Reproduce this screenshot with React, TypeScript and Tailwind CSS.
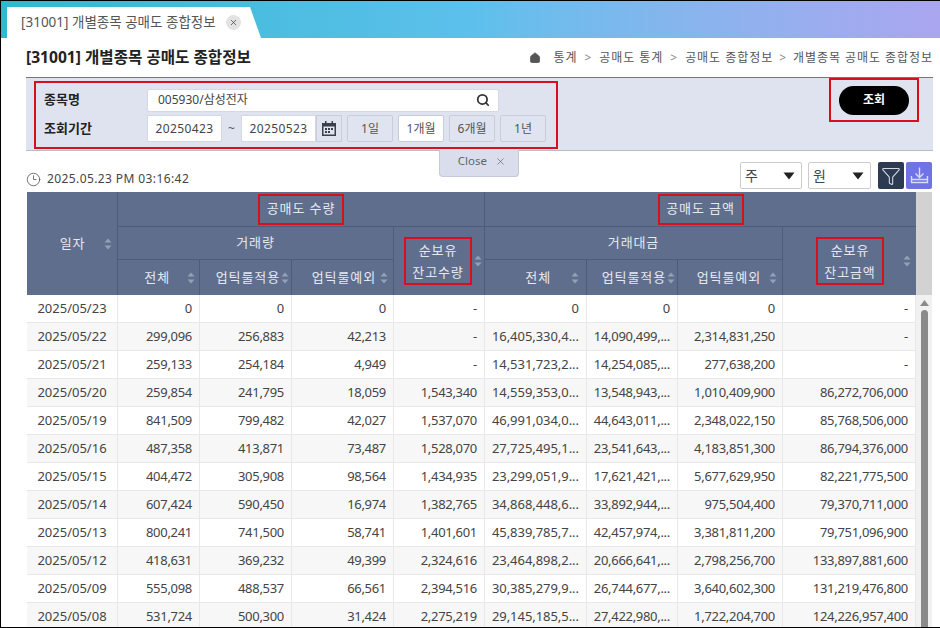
import { Clock3, Filter, Home, Search, X } from "lucide-react";

const rows = [
    ["2025/05/23", "0", "0", "0", "-", "0", "0", "0", "-"],
    ["2025/05/22", "299,096", "256,883", "42,213", "-", "16,405,330,4...", "14,090,499,...", "2,314,831,250", "-"],
    ["2025/05/21", "259,133", "254,184", "4,949", "-", "14,531,723,2...", "14,254,085,...", "277,638,200", "-"],
    ["2025/05/20", "259,854", "241,795", "18,059", "1,543,340", "14,559,353,0...", "13,548,943,...", "1,010,409,900", "86,272,706,000"],
    ["2025/05/19", "841,509", "799,482", "42,027", "1,537,070", "46,991,034,0...", "44,643,011,...", "2,348,022,150", "85,768,506,000"],
    ["2025/05/16", "487,358", "413,871", "73,487", "1,528,070", "27,725,495,1...", "23,541,643,...", "4,183,851,300", "86,794,376,000"],
    ["2025/05/15", "404,472", "305,908", "98,564", "1,434,935", "23,299,051,9...", "17,621,421,...", "5,677,629,950", "82,221,775,500"],
    ["2025/05/14", "607,424", "590,450", "16,974", "1,382,765", "34,868,448,6...", "33,892,944,...", "975,504,400", "79,370,711,000"],
    ["2025/05/13", "800,241", "741,500", "58,741", "1,401,601", "45,839,785,7...", "42,457,974,...", "3,381,811,200", "79,751,096,900"],
    ["2025/05/12", "418,631", "369,232", "49,399", "2,324,616", "23,464,898,2...", "20,666,641,...", "2,798,256,700", "133,897,881,600"],
    ["2025/05/09", "555,098", "488,537", "66,561", "2,394,516", "30,385,279,9...", "26,744,677,...", "3,640,602,300", "131,219,476,800"],
    ["2025/05/08", "531,724", "500,300", "31,424", "2,275,219", "29,145,185,5...", "27,422,980,...", "1,722,204,700", "124,226,957,400"],
];

const cols = "grid-cols-[91px_82px_92px_102px_91px_102px_91px_105px_133px]";

function SortIcon() {
    return (
        <svg width="8" height="12" viewBox="0 0 8 12" className="shrink-0">
            <path d="M4 0.5 L7.5 4.5 H0.5 Z M4 11.5 L0.5 7.5 H7.5 Z" fill="#93a0b8" />
        </svg>
    );
}

function RangeBtn({ label, white }: { label: string; white?: boolean }) {
    return (
        <button
            className={
                white
                    ? "w-[46px] h-[27px] border border-[#c9cdda] rounded-[2px] bg-white text-[12px] text-[#555]"
                    : "w-[46px] h-[27px] border border-[#c9cdda] rounded-[2px] bg-[#e0e4f0] text-[12px] text-[#555]"
            }
        >
            {label}
        </button>
    );
}

function Caret() {
    return (
        <svg width="12" height="8" viewBox="0 0 12 8">
            <path d="M0.5 0.5 H11.5 L6 7.5 Z" fill="#222" />
        </svg>
    );
}

function CalendarIcon() {
    return (
        <svg width="16" height="17" viewBox="0 0 16 17">
            <path d="M1 3 H4 V1 H5.5 V3 H10.5 V1 H12 V3 H15 V16 H1 Z" fill="#3a3f4c" />
            <rect x="2.5" y="6.5" width="11" height="8" fill="#e0e4f0" />
            <path d="M4 8 H6 V10 H4 Z M7 8 H9 V10 H7 Z M10 8 H12 V10 H10 Z M4 11 H6 V13 H4 Z M7 11 H9 V13 H7 Z" fill="#3a3f4c" />
        </svg>
    );
}

function App() {
    return (
        <div className="relative w-[940px] h-[628px] overflow-hidden bg-white border-y border-l border-black font-['Noto_Sans','Noto_Sans_CJK_KR',sans-serif] text-[#333]">
            {/* top tab bar */}
            <div className="h-[37px] pl-[6px] pt-[6px] bg-gradient-to-r from-[#2fb9cf] via-[#5cc0ec] to-[#aaa6ef]">
                <div className="w-[254px] h-[31px] pl-[14px] flex items-center bg-white [clip-path:polygon(0_0,243px_0,254px_100%,0_100%)]">
                    <span className="text-[13.5px] text-[#555] whitespace-nowrap">[31001] 개별종목 공매도 종합정보</span>
                    <span className="ml-[10px] w-[15px] h-[15px] rounded-full bg-[#e3e3e3] flex items-center justify-center">
                        <X size={9} strokeWidth={2} className="text-[#444]" />
                    </span>
                </div>
            </div>

            <div className="pl-[25px] pr-[7px]">
                {/* title + breadcrumb */}
                <div className="h-[39px] flex items-center justify-between">
                    <h1 className="text-[15.6px] font-bold text-[#222] whitespace-nowrap">[31001] 개별종목 공매도 종합정보</h1>
                    <div className="flex items-center text-[12px] text-[#555] whitespace-nowrap tracking-[0.95px]">
                        <Home size={12} fill="#555" strokeWidth={1.5} className="mr-[12px]" />
                        <span>통계</span>
                        <span className="mx-[7px] text-[#888]">&gt;</span>
                        <span>공매도 통계</span>
                        <span className="mx-[7px] text-[#888]">&gt;</span>
                        <span>공매도 종합정보</span>
                        <span className="mx-[6px] text-[#888]">&gt;</span>
                        <span>개별종목 공매도 종합정보</span>
                    </div>
                </div>

                {/* search panel */}
                <div className="relative h-[74px] bg-[#dfe3f0] border-t border-[#777] border-b-[1px] border-b-[#b9bdca] flex justify-between">
                    <div className="ml-[8px] mt-[3px] w-[524px] h-[68px] border-2 border-[#d8101c] pl-[8px] pt-[5px]">
                        <div className="flex items-center h-[24px]">
                            <span className="w-[103px] text-[13px] font-bold text-[#222]">종목명</span>
                            <div className="w-[352px] h-[23px] bg-white border border-[#d5d8e3] rounded-[2px] flex items-center justify-between pl-[10px] pr-[8px]">
                                <span className="text-[12px] text-[#444]">005930/삼성전자</span>
                                <Search size={14} strokeWidth={3} className="text-[#333]" />
                            </div>
                        </div>
                        <div className="flex items-center h-[27px] mt-[3px]">
                            <span className="w-[103px] text-[13px] font-bold text-[#222]">조회기간</span>
                            <div className="w-[75px] h-[27px] bg-white border border-[#d5d8e3] rounded-[2px] flex items-center justify-center text-[12px] text-[#444] tracking-[0.4px]">20250423</div>
                            <span className="w-[19px] text-center text-[12px] text-[#555]">~</span>
                            <div className="w-[75px] h-[27px] bg-white border border-[#d5d8e3] flex items-center justify-center text-[12px] text-[#444] tracking-[0.4px]">20250523</div>
                            <div className="w-[26px] h-[27px] border border-[#c9cdda] flex items-center justify-center">
                                <CalendarIcon />
                            </div>
                            <div className="flex gap-[5px] ml-[5px]">
                                <RangeBtn label="1일" />
                                <RangeBtn label="1개월" white />
                                <RangeBtn label="6개월" />
                                <RangeBtn label="1년" />
                            </div>
                        </div>
                    </div>
                    <div className="mr-[14px] w-[90px] h-[44px] border-2 border-[#d8101c] flex items-center justify-center">
                        <button className="w-[70px] h-[29px] rounded-full bg-black text-white text-[12px] font-bold">조회</button>
                    </div>

                    {/* close tab under the panel */}
                    <div className="absolute left-[413px] top-[72px] w-[80px] h-[27px] z-10 bg-[#d9ddec] border border-t-0 border-[#c5c9d8] rounded-b-[4px] flex items-center justify-end gap-[8px] pr-[12px] pb-[4px] text-[11.5px] text-[#666]">
                        Close
                        <X size={11} strokeWidth={1.5} />
                    </div>
                </div>

                {/* time + options */}
                <div className="h-[41px] flex items-center justify-between">
                    <div className="flex items-center pt-[15px] text-[12px] text-[#444] tracking-[0.4px]">
                        <Clock3 size={15} strokeWidth={1.3} className="mr-[6px] text-[#555]" />
                        2025.05.23 PM 03:16:42
                    </div>
                    <div className="flex items-center pt-[8px] mr-[1px]">
                        <div className="w-[62px] h-[27px] bg-white border border-[#ccc] rounded-[2px] flex items-center justify-between pl-[4px] pr-[6px] text-[14px] text-[#444]">
                            주
                            <Caret />
                        </div>
                        <div className="ml-[6px] w-[63px] h-[27px] bg-white border border-[#ccc] rounded-[2px] flex items-center justify-between pl-[4px] pr-[6px] text-[14px] text-[#444]">
                            원
                            <Caret />
                        </div>
                        <div className="ml-[7px] w-[26px] h-[27px] rounded-[2px] bg-[#2c3a52] flex items-center justify-center">
                            <Filter size={20} strokeWidth={1.3} className="text-[#d5dae5]" />
                        </div>
                        <div className="ml-[2px] w-[26px] h-[27px] rounded-[2px] bg-[#6f73e6] flex items-center justify-center">
                            <svg width="19" height="19" viewBox="0 0 19 19" fill="none" stroke="#d8dbf8" strokeWidth="1.4">
                                <path d="M9.5 1.5 V11 M5.5 7.5 L9.5 11.5 L13.5 7.5 M1.5 10 V16.5 H17.5 V10 M1.5 13.5 H17.5" />
                            </svg>
                        </div>
                    </div>
                </div>

                {/* grid */}
                <div className="flex">
                    <div className="w-[889px] ml-[1px]">
                        <div className={`grid ${cols} grid-rows-[35px_33px_35px] bg-[#5f6e8d] text-[13px] text-[#e6e9f0] tracking-[0.9px]`}>
                            <div className="row-span-3 border-r border-[#4e5c7a] flex items-center justify-center gap-[19px]">
                                <span className="ml-[28px]">일자</span>
                                <SortIcon />
                            </div>
                            <div className="col-span-4 border-r border-b border-[#4e5c7a] flex items-center justify-center">
                                <span className="w-[86px] h-[31px] border-2 border-[#d8101c] flex items-center justify-center">공매도 수량</span>
                            </div>
                            <div className="col-span-4 border-b border-[#4e5c7a] flex items-center justify-center">
                                <span className="w-[86px] h-[31px] border-2 border-[#d8101c] flex items-center justify-center">공매도 금액</span>
                            </div>

                            <div className="col-span-3 border-r border-b border-[#4e5c7a] flex items-center justify-center">거래량</div>
                            <div className="row-span-2 border-r border-[#4e5c7a] flex items-center">
                                <span className="ml-[10px] w-[68px] h-[48px] border-2 border-[#d8101c] flex flex-col items-center justify-center leading-[22px] whitespace-nowrap">
                                    <span>순보유</span>
                                    <span>잔고수량</span>
                                </span>
                                <span className="ml-[2px]">
                                    <SortIcon />
                                </span>
                            </div>
                            <div className="col-span-3 border-r border-b border-[#4e5c7a] flex items-center justify-center">거래대금</div>
                            <div className="row-span-2 flex items-center">
                                <span className="ml-[33px] w-[68px] h-[48px] border-2 border-[#d8101c] flex flex-col items-center justify-center leading-[22px] whitespace-nowrap">
                                    <span>순보유</span>
                                    <span>잔고금액</span>
                                </span>
                                <span className="ml-[19px]">
                                    <SortIcon />
                                </span>
                            </div>

                            <div className="border-r border-[#4e5c7a] flex items-center justify-end pr-[4px] gap-[17px]">
                                전체
                                <SortIcon />
                            </div>
                            <div className="border-r border-[#4e5c7a] flex items-center justify-end pr-[2px] gap-[1px] whitespace-nowrap">
                                업틱룰적용
                                <SortIcon />
                            </div>
                            <div className="border-r border-[#4e5c7a] flex items-center justify-end pr-[5px] gap-[4px] whitespace-nowrap">
                                업틱룰예외
                                <SortIcon />
                            </div>
                            <div className="border-r border-[#4e5c7a] flex items-center justify-end pr-[7px] gap-[20px]">
                                전체
                                <SortIcon />
                            </div>
                            <div className="border-r border-[#4e5c7a] flex items-center justify-end pr-[2px] gap-[1px] whitespace-nowrap">
                                업틱룰적용
                                <SortIcon />
                            </div>
                            <div className="border-r border-[#4e5c7a] flex items-center justify-end pr-[5px] gap-[8px] whitespace-nowrap">
                                업틱룰예외
                                <SortIcon />
                            </div>
                        </div>

                        {rows.map((row, i) => (
                            <div key={row[0]} className={i % 2 === 1 ? `grid ${cols} h-[28px] bg-[#f7f7f7]` : `grid ${cols} h-[28px] bg-white`}>
                                {row.map((cell, j) => (
                                    <div
                                        key={j}
                                        className={
                                            j === 0
                                                ? "border-r border-b border-[#e8e8e8] flex items-center justify-center text-[13px] text-[#444] whitespace-nowrap"
                                                : j === 5
                                                ? "border-r border-b border-[#e8e8e8] flex items-center justify-end pr-[7px] text-[13px] text-[#444] whitespace-nowrap tracking-[-0.05px]"
                                                : "border-r border-b border-[#e8e8e8] flex items-center justify-end pr-[7px] text-[13px] text-[#444] whitespace-nowrap tracking-[-0.3px]"
                                        }
                                    >
                                        {cell}
                                    </div>
                                ))}
                            </div>
                        ))}
                    </div>

                    {/* scrollbar */}
                    <div className="w-[16px] flex flex-col">
                        <div className="h-[103px] bg-[#d2d2d2]" />
                        <div className="flex-1 bg-[#f1f1f1] flex flex-col items-center pt-[5px]">
                            <svg width="9" height="6" viewBox="0 0 9 6">
                                <path d="M4.5 0 L9 6 H0 Z" fill="#8a8a8a" />
                            </svg>
                            <div className="mt-[4px] w-[7px] h-[330px] rounded-[4px] bg-[#8a8a8a]" />
                        </div>
                    </div>
                </div>
            </div>
        </div>
    );
}

export default App;
